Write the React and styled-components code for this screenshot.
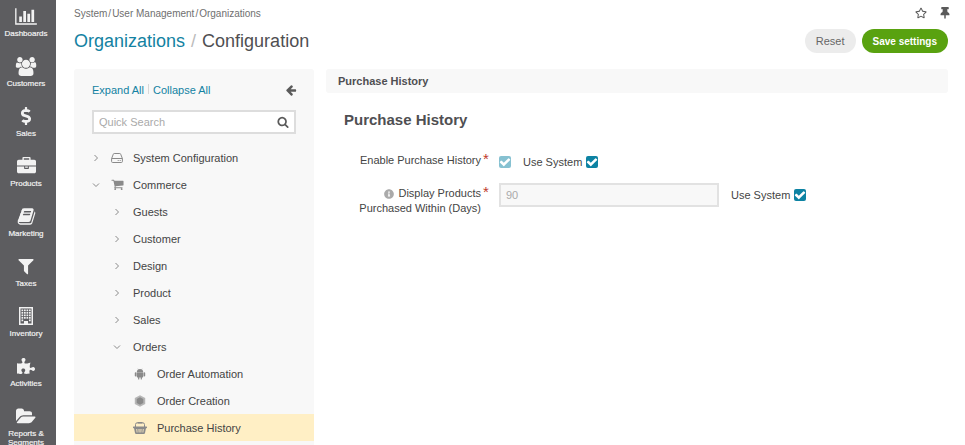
import React from "react";
import styled, { createGlobalStyle, css } from "styled-components";
import {
  FaDollarSign,
  FaInfoCircle,
  FaPuzzlePiece,
  FaRegStar,
  FaThumbtack,
} from "react-icons/fa";

const colors = {
  text: "#444",
  heading: "#4f4f52",
  muted: "#8a8a8a",
  link: "#1382a2",
  teal: "#0d83a3",
  green: "#59a210",
  panel: "#f8f8f8",
  border: "#ddd",
  sidebar: "#5d5d60",
  active: "#ffefc5",
};

const GlobalStyle = createGlobalStyle`
  *, *::before, *::after { box-sizing: border-box; }
  body {
    margin: 0;
    background: #fff;
    color: ${colors.text};
    font-family: "Liberation Sans", Arial, sans-serif;
    font-size: 11px;
    overflow: hidden;
  }
  button, input { font: inherit; color: inherit; }
  a { color: inherit; text-decoration: none; }
  ul { list-style: none; margin: 0; padding: 0; }
  svg { display: block; }
`;

/* ---------- icons ---------- */

const Glyph = ({ box = "0 0 1792 1792", w = 16, h = 16, children }) => (
  <svg viewBox={box} width={w} height={h} fill="currentColor" aria-hidden="true">
    {children}
  </svg>
);

const ChartIcon = () => (
  <Glyph box="0 0 2048 1792" w={22} h={19}>
    <path d="M640 896v512h-256v-512h256zm384-512v1024h-256v-1024h256zm1024 1152v128h-2048v-1536h128v1408h1920zm-640-896v768h-256v-768h256zm384-384v1152h-256v-1152h256z" />
  </Glyph>
);
const UsersIcon = () => (
  <Glyph box="0 0 2048 1792" w={22} h={19}>
    <path d="M657 896q-162 5-265 128h-134q-82 0-138-40.500t-56-118.500q0-353 124-353 6 0 43.500 21t97.500 42.500 119 21.500q67 0 133-23-5 37-5 66 0 159 90 283zm1071 637q0 120-73 189.500t-194 69.500h-874q-121 0-194-69.500t-73-189.500q0-53 3.500-103.500t14-109 26.500-108.500 43-97.500 62-81 85.500-53.500 111.500-20q10 0 43 21.500t73 48 107 48 135 21.500 135-21.500 107-48 73-48 43-21.500q61 0 111.500 20t85.500 53.500 62 81 43 97.500 26.500 108.500 14 109 3.500 103.500zm-1024-1277q0 106-75 181t-181 75-181-75-75-181 75-181 181-75 181 75 75 181zm704 384q0 159-112.500 271.500t-271.500 112.500-271.500-112.500-112.500-271.500 112.500-271.500 271.500-112.500 271.500 112.500 112.500 271.500zm576 225q0 78-56 118.500t-138 40.500h-134q-103-123-265-128 90-124 90-283 0-29-5-66 66 23 133 23 59 0 119-21.500t97.500-42.500 43.500-21q124 0 124 353zm-128-609q0 106-75 181t-181 75-181-75-75-181 75-181 181-75 181 75 75 181z" />
  </Glyph>
);
const BriefcaseIcon = () => (
  <Glyph w={19} h={19}>
    <path d="M640 256h512v-128h-512v128zm1152 640v480q0 66-47 113t-113 47h-1472q-66 0-113-47t-47-113v-480h672v160q0 26 19 45t45 19h320q26 0 45-19t19-45v-160h672zm-768 0v128h-256v-128h256zm768-480v384h-1792v-384q0-66 47-113t113-47h352v-160q0-40 28-68t68-28h576q40 0 68 28t28 68v160h352q66 0 113 47t47 113z" />
  </Glyph>
);
const BookIcon = () => (
  <Glyph w={19} h={19}>
    <path d="M1703 478q40 57 18 129l-275 906q-19 64-76.500 107.500t-122.500 43.500h-923q-77 0-148.500-53.500t-99.500-131.500q-24-67-2-127 0-4 3-27t4-37q1-8-3-21.500t-3-19.500q2-11 8-21t16.500-23.500 16.500-23.500q23-38 45-91.500t30-91.500q3-10 .5-30t-.5-28q3-11 17-28t17-23q21-36 42-92t25-90q1-9-2.500-32t.5-28q4-13 22-30.500t22-22.500q19-26 42.500-84.500t27.500-96.500q1-8-3-25.500t-2-26.500q2-8 9-18t18-23 17-21q8-12 16.500-30.500t15-35 16-36 19.500-32 26.500-23.500 36-11.500 47.500 5.500l-1 3q38-9 51-9h761q74 0 114 56t18 130l-274 906q-36 119-71.500 153.500t-128.500 34.500h-869q-27 0-38 15-11 16-1 43 24 70 144 70h923q29 0 56-15.500t35-41.500l300-987q7-22 5-57 38 15 59 43zm-1064 2q-4 13 2 22.500t20 9.500h608q13 0 25.500-9.500t16.500-22.500l21-64q4-13-2-22.500t-20-9.500h-608q-13 0-25.500 9.500t-16.500 22.500zm-83 256q-4 13 2 22.500t20 9.500h608q13 0 25.500-9.500t16.500-22.500l21-64q4-13-2-22.500t-20-9.500h-608q-13 0-25.500 9.500t-16.500 22.500z" />
  </Glyph>
);
const FilterIcon = () => (
  <Glyph box="0 0 1664 1792" w={18} h={20}>
    <path d="M1531 295q17 41-14 70l-493 493v742q0 42-39 59-13 5-25 5-27 0-45-19l-256-256q-19-19-19-45v-486l-493-493q-31-29-14-70 17-39 59-39h1280q42 0 59 39z" />
  </Glyph>
);
const BuildingIcon = () => (
  <Glyph box="0 0 16 20" w={16} h={20}>
    <path
      fillRule="evenodd"
      d="M1 1h14v18H1zM2.500 2.500v15H6V15h4v2.500h3.500v-15z"
    />
    {[3.5, 6, 8.5, 11].map((y) =>
      [3.5, 6, 8.5, 11].map((x) => (
        <rect key={`${x}-${y}`} x={x} y={y} width="1.700" height="1.700" />
      ))
    )}
    <path d="M3.500 13.500h1.700v1.700H3.500zM11 13.500h1.700v1.700H11z" />
  </Glyph>
);
const FolderIcon = () => (
  <Glyph box="0 0 1920 1792" w={20} h={19}>
    <path d="M1879 952q0 31-31 66l-336 396q-43 51-120.500 86.500t-143.500 35.500h-1088q-34 0-60.500-13t-26.500-43q0-31 31-66l336-396q43-51 120.500-86.500t143.500-35.500h1088q34 0 60.500 13t26.500 43zm-343-344v160h-832q-94 0-197 47.500t-164 119.500l-337 396-5 6q0-4-.5-12.500t-.5-12.500v-960q0-92 66-158t158-66h320q92 0 158 66t66 158v32h544q92 0 158 66t66 158z" />
  </Glyph>
);
const SearchIcon = () => (
  <Glyph w={12} h={12}>
    <path d="M1216 832q0-185-131.500-316.500t-316.500-131.500-316.500 131.500-131.500 316.500 131.500 316.500 316.500 131.500 316.500-131.500 131.500-316.500zm512 832q0 52-38 90t-90 38q-54 0-90-38l-343-342q-179 124-399 124-143 0-273.500-55.500t-225-150-150-225-55.500-273.500 55.500-273.500 150-225 225-150 273.500-55.500 273.500 55.500 225 150 150 225 55.500 273.500q0 220-124 399l343 343q37 37 37 90z" />
  </Glyph>
);
const ArrowIcon = () => (
  <Glyph w={12} h={12}>
    <path d="M1664 896v128q0 53-32.500 90.500t-84.500 37.500h-704l293 294q38 36 38 90t-38 90l-75 76q-37 37-90 37-52 0-91-37l-651-652q-37-37-37-90 0-52 37-91l651-650q38-38 91-38 52 0 90 38l75 74q38 38 38 91t-38 91l-293 293h704q52 0 84.500 37.500t32.500 90.500z" />
  </Glyph>
);
const CartIcon = () => (
  <Glyph w={13} h={13}>
    <path d="M704 1536q0 52-38 90t-90 38-90-38-38-90 38-90 90-38 90 38 38 90zm896 0q0 52-38 90t-90 38-90-38-38-90 38-90 90-38 90 38 38 90zm128-1088v512q0 24-16.500 42.500t-40.500 21.500l-1044 122q13 60 13 70 0 16-24 64h920q26 0 45 19t19 45-19 45-45 19h-1024q-26 0-45-19t-19-45q0-11 8-31.500t16-36 21.500-40 15.500-29.500l-177-823h-204q-26 0-45-19t-19-45 19-45 45-19h256q16 0 28.500 6.500t19.500 15.500 13 24.500 8 26 5.500 29.500 4.500 26h1201q26 0 45 19t19 45z" />
  </Glyph>
);
const CheckIcon = () => (
  <Glyph w={12} h={12}>
    <path d="M1671 566q0 40-28 68l-724 724-136 136q-28 28-68 28t-68-28l-136-136-362-362q-28-28-28-68t28-68l136-136q28-28 68-28t68 28l294 295 656-657q28-28 68-28t68 28l136 136q28 28 28 68z" />
  </Glyph>
);
const DriveIcon = () => (
  <svg viewBox="0 0 12 12" width="12" height="12" fill="none" stroke="currentColor" aria-hidden="true">
    <path d="M.6 6.500 2.300 2.200Q2.500 1.500 3.200 1.500h5.600q.7 0 .9.700l1.700 4.300v3q0 1-1 1H1.600q-1 0-1-1zM.6 6.500h10.800M6.700 8.500h1M8.700 8.500h1" />
  </svg>
);
const RobotIcon = () => (
  <Glyph box="0 0 12 12" w={12} h={12}>
    <path d="M2.800 4C2.800 2.100 4.200 1 6 1s3.200 1.100 3.200 3z" />
    <path d="M2.800 4.300h6.400v4.500q0 .7-.7.7H7.900v1.400q0 .6-.6.600t-.6-.6V9.500H5.300v1.400q0 .6-.6.600t-.6-.6V9.500h-.6q-.7 0-.7-.7z" />
    <rect x=".8" y="4.300" width="1.700" height="4.200" rx=".8" />
    <rect x="9.500" y="4.300" width="1.700" height="4.200" rx=".8" />
    <path d="m3.800.6.8 1.200M8.200.6 7.400 1.800" stroke="currentColor" strokeWidth=".4" />
  </Glyph>
);
const HexIcon = () => (
  <Glyph box="0 0 12 12" w={12} h={12}>
    <path opacity=".6" d="M6 .2 11.200 3.100v5.800L6 11.800.8 8.900V3.100z" />
    <path d="M6 2.200 9.300 4.100v3.800L6 9.800 2.700 7.900V4.100z" />
  </Glyph>
);
const BasketIcon = () => (
  <svg viewBox="0 0 14 12" width="14" height="12" fill="currentColor" aria-hidden="true">
    <path d="M2.500 5V2.500q0-1.700 1.700-1.700h5.600q1.700 0 1.700 1.700V5" fill="none" stroke="currentColor" />
    <rect x="4.500" y="0" width="5" height="1.600" rx=".6" />
    <rect x="0" y="4.500" width="14" height="1.700" rx=".6" />
    <path
      fillRule="evenodd"
      d="M1 6h12l-1 5q-.2 1-1.200 1H3.200q-1 0-1.200-1zM3.300 7l.4 3.600h.8L4.200 7zM5.500 7l.2 3.600h.8V7zM7.500 7v3.600h.8L8.500 7zM9.800 7l-.3 3.600h.8l.4-3.600z"
    />
  </svg>
);
const Chevron = ({ open }) => (
  <svg viewBox="0 0 8 8" width="8" height="8" fill="none" stroke="currentColor" aria-hidden="true">
    <path d={open ? "M1 2.500 4 5.500 7 2.500" : "M2.500 1 5.500 4 2.500 7"} />
  </svg>
);

/* ---------- shell ---------- */

const Shell = styled.div`
  display: flex;
  height: 100vh;
  overflow: hidden;
`;
const Sidebar = styled.nav`
  flex: 0 0 56px;
  background: ${colors.sidebar};
  color: #f2f2f2;
  overflow: hidden;
`;
const SideLink = styled.a`
  display: flex;
  flex-direction: column;
  align-items: center;
  height: 50px;
  padding: 6px 4px 0 0;
  gap: 3px;
  font-size: 8px;
  line-height: 9px;
  text-align: center;
  -webkit-text-stroke: 0.2px currentColor;
`;
const SideIcon = styled.span`
  display: grid;
  place-items: center;
  flex: 0 0 20px;
`;
const Page = styled.div`
  flex: 1;
  min-width: 0;
  display: flex;
  flex-direction: column;
  padding: 0 17px 0 18px;
`;

/* ---------- header ---------- */

const TopLine = styled.div`
  display: flex;
  justify-content: space-between;
  align-items: center;
  height: 26px;
  margin-right: -3px;
`;
const Breadcrumbs = styled.nav`
  display: flex;
  gap: 1px;
  color: #6f6f6f;
  font-size: 10px;
`;
const TopTools = styled.div`
  display: flex;
  gap: 12px;
`;
const IconButton = styled.button`
  display: grid;
  place-items: center;
  border: 0;
  padding: 0;
  min-width: 12px;
  background: none;
  color: #5a5a5a;
`;
const TitleLine = styled.div`
  display: flex;
  justify-content: space-between;
  align-items: center;
  height: 30px;
`;
const Title = styled.h1`
  display: flex;
  gap: 6px;
  margin: 0;
  font-size: 18px;
  font-weight: 400;
  color: ${colors.heading};
  a { color: ${colors.link}; }
  span { color: #bbb; }
`;
const Actions = styled.div`
  display: flex;
  gap: 6px;
`;
const Button = styled.button`
  height: 24px;
  padding: 0 11px;
  border: 0;
  border-radius: 12px;
  background: #ececec;
  color: #666;
  ${(p) =>
    p.$primary &&
    css`
      background: ${colors.green};
      color: #fff;
      font-size: 10px;
      font-weight: 700;
    `}
`;

/* ---------- tree ---------- */

const Columns = styled.div`
  flex: 1;
  min-height: 0;
  display: flex;
  gap: 12px;
  padding-top: 13px;
`;
const TreePanel = styled.aside`
  flex: 0 0 240px;
  background: ${colors.panel};
  border-radius: 3px 3px 0 0;
  overflow: hidden;
`;
const TreeHead = styled.div`
  display: flex;
  align-items: center;
  justify-content: space-between;
  height: 41px;
  padding: 0 17px 0 18px;
`;
const TreeActions = styled.div`
  display: flex;
  gap: 4px;
`;
const TextButton = styled.button`
  border: 0;
  padding: 0;
  background: none;
  color: ${colors.link};
  & + & {
    padding-left: 5px;
    background: linear-gradient(#d8d8d8, #d8d8d8) no-repeat left top / 1px 10px;
  }
`;
const SearchBox = styled.form`
  display: flex;
  height: 24px;
  margin: 0 18px 10px;
  padding: 0 5px;
  border: 2px solid ${colors.border};
  background: #fff;
`;
const SearchInput = styled.input`
  flex: 1;
  min-width: 0;
  padding: 0;
  border: 0;
  outline: 0;
  background: none;
  &::placeholder { color: #aaa; opacity: 1; }
`;
const TreeRow = styled.a`
  display: flex;
  align-items: center;
  height: 27px;
  padding-left: ${(p) => [18, 39, 59][p.$level]}px;
  background: ${(p) => (p.$active ? colors.active : "transparent")};
`;
const Slot = styled.span`
  display: grid;
  place-items: center;
  flex: 0 0 ${(p) => p.$width}px;
  margin-right: ${(p) => p.$gap}px;
  color: ${colors.muted};
`;

/* ---------- settings ---------- */

const Content = styled.main`
  flex: 1;
  min-width: 0;
`;
const SectionBar = styled.h2`
  margin: 0;
  padding: 0 12px;
  background: ${colors.panel};
  border-radius: 3px;
  color: ${colors.heading};
  font-size: 11px;
  line-height: 24px;
`;
const Group = styled.section`
  padding: 18px;
`;
const GroupTitle = styled.h3`
  margin: 0 0 24px;
  color: ${colors.heading};
  font-size: 15px;
  line-height: 18px;
`;
const Field = styled.div`
  display: flex;
  min-height: 33px;
`;
const FieldLabel = styled.label`
  flex: 0 0 137px;
  line-height: 15px;
  text-align: right;
  svg {
    display: inline-block;
    vertical-align: middle;
    margin-right: 4px;
    color: #aaa;
  }
`;
const Required = styled.span`
  flex: 0 0 18px;
  padding-left: 2px;
  color: #c0392b;
  font-size: 15px;
  line-height: 12px;
`;
const Controls = styled.div`
  display: flex;
  align-items: center;
  gap: 12px;
  height: 17px;
`;
const NumberInput = styled.input`
  width: 220px;
  min-width: 0;
  height: 24px;
  padding: 0 5px;
  border: 2px solid #e2e2e2;
  background: ${colors.panel};
  color: #aaa;
`;
const Use = styled.label`
  display: flex;
  align-items: center;
  gap: 4px;
  white-space: nowrap;
`;
const Tick = styled.span`
  display: grid;
  width: 12px;
  height: 12px;
  color: #fff;
  & > * { grid-area: 1 / 1; }
  & > svg { pointer-events: none; }
`;
const TickInput = styled.input`
  appearance: none;
  margin: 0;
  width: 12px;
  height: 12px;
  border-radius: 2px;
  background: ${colors.teal};
  &:disabled { background: #86c1d1; }
  &:not(:checked) + svg { visibility: hidden; }
`;

const Checkbox = (props) => (
  <Tick>
    <TickInput type="checkbox" defaultChecked {...props} />
    <CheckIcon />
  </Tick>
);
const UseSystem = ({ id }) => (
  <Use htmlFor={id}>
    Use System <Checkbox id={id} />
  </Use>
);

const menu = [
  ["Dashboards", <ChartIcon />],
  ["Customers", <UsersIcon />],
  ["Sales", <FaDollarSign size={18} />],
  ["Products", <BriefcaseIcon />],
  ["Marketing", <BookIcon />],
  ["Taxes", <FilterIcon />],
  ["Inventory", <BuildingIcon />],
  ["Activities", <FaPuzzlePiece size={18} />],
  ["Reports & Segments", <FolderIcon />],
];

const tree = [
  { name: "System Configuration", level: 0, icon: <DriveIcon /> },
  { name: "Commerce", level: 0, open: true, icon: <CartIcon /> },
  { name: "Guests", level: 1 },
  { name: "Customer", level: 1 },
  { name: "Design", level: 1 },
  { name: "Product", level: 1 },
  { name: "Sales", level: 1 },
  { name: "Orders", level: 1, open: true },
  { name: "Order Automation", level: 2, icon: <RobotIcon /> },
  { name: "Order Creation", level: 2, icon: <HexIcon /> },
  { name: "Purchase History", level: 2, icon: <BasketIcon />, active: true },
];

export default function App() {
  return (
    <Shell>
      <GlobalStyle />
      <Sidebar aria-label="Main menu">
        {menu.map(([name, icon]) => (
          <SideLink href="#" key={name}>
            <SideIcon>{icon}</SideIcon>
            {name}
          </SideLink>
        ))}
      </Sidebar>
      <Page>
        <TopLine>
          <Breadcrumbs aria-label="Breadcrumb">
            <a href="#">System</a>
            <span>/</span>
            <a href="#">User Management</a>
            <span>/</span>
            <a href="#">Organizations</a>
          </Breadcrumbs>
          <TopTools>
            <IconButton aria-label="Add to favorites">
              <FaRegStar size={12} />
            </IconButton>
            <IconButton aria-label="Pin page">
              <FaThumbtack size={12} />
            </IconButton>
          </TopTools>
        </TopLine>
        <TitleLine>
          <Title>
            <a href="#">Organizations</a>
            <span>/</span>
            Configuration
          </Title>
          <Actions>
            <Button type="reset">Reset</Button>
            <Button type="submit" $primary>Save settings</Button>
          </Actions>
        </TitleLine>
        <Columns>
          <TreePanel>
            <TreeHead>
              <TreeActions>
                <TextButton>Expand All</TextButton>
                <TextButton>Collapse All</TextButton>
              </TreeActions>
              <IconButton aria-label="Hide sidebar">
                <ArrowIcon />
              </IconButton>
            </TreeHead>
            <SearchBox role="search">
              <SearchInput type="text" aria-label="Quick Search" placeholder="Quick Search" />
              <IconButton type="button" aria-label="Search">
                <SearchIcon />
              </IconButton>
            </SearchBox>
            <ul>
              {tree.map(({ name, level, open, icon, active }) => (
                <li key={name}>
                  <TreeRow href="#" $level={level} $active={active}>
                    {level < 2 && (
                      <Slot $width={8} $gap={level ? 12 : 10}>
                        <Chevron open={open} />
                      </Slot>
                    )}
                    {icon && (
                      <Slot $width={14} $gap={level ? 10 : 9}>
                        {icon}
                      </Slot>
                    )}
                    {name}
                  </TreeRow>
                </li>
              ))}
            </ul>
          </TreePanel>
          <Content>
            <SectionBar>Purchase History</SectionBar>
            <Group>
              <GroupTitle>Purchase History</GroupTitle>
              <Field>
                <FieldLabel htmlFor="enable">Enable Purchase History</FieldLabel>
                <Required>*</Required>
                <Controls>
                  <Checkbox id="enable" disabled />
                  <UseSystem id="enable-system" />
                </Controls>
              </Field>
              <Field>
                <FieldLabel htmlFor="days">
                  <FaInfoCircle size={10} />
                  Display Products Purchased Within (Days)
                </FieldLabel>
                <Required>*</Required>
                <Controls>
                  <NumberInput id="days" type="text" defaultValue="90" disabled />
                  <UseSystem id="days-system" />
                </Controls>
              </Field>
            </Group>
          </Content>
        </Columns>
      </Page>
    </Shell>
  );
}
